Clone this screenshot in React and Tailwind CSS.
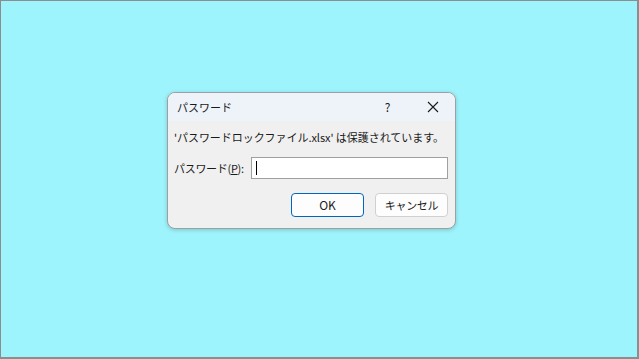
import React from 'react';

const font = { fontFamily: '"Noto Sans CJK JP", "Noto Sans", sans-serif' };

const App = () => {
    return (
        <div
            className="w-[639px] h-[359px] bg-[#9ef4fc] border border-[#8d8d8d] border-r-2 border-b-2 pl-[166px] pt-[91px]"
            style={font}
        >
            <div className="w-[289px] h-[137px] bg-[#f0f0f0] border border-[#9aa0a6] rounded-[8px] shadow-[0_1px_4px_rgba(0,0,0,0.2)] flex flex-col overflow-hidden text-[11px] text-[#1a1a1a] whitespace-nowrap">
                {/* タイトルバー */}
                <div className="h-[28px] bg-[#eef3f9] flex items-center pl-[9px]">
                    <span className="flex-1 leading-none">パスワード</span>
                    <span className="w-[45px] text-center text-[12px] leading-none">?</span>
                    <span className="w-[45px] flex items-center justify-center">
                        <svg width="12" height="12" viewBox="0 0 12 12">
                            <path d="M1 1L11 11M11 1L1 11" stroke="#1a1a1a" strokeWidth="1.1" />
                        </svg>
                    </span>
                </div>

                <div className="flex flex-col px-[6px] pt-[11px]">
                    <p className="leading-none tracking-[-0.05px]">'パスワードロックファイル.xlsx' は保護されています。</p>

                    <div className="flex items-center mt-[14px]">
                        <label className="w-[77px] leading-none tracking-[-0.3px]">
                            パスワード(<span className="underline">P</span>):
                        </label>
                        <div className="w-[197px] h-[22px] bg-white border border-[#a0a0a0] flex items-center pl-[4px]">
                            <div className="w-[1px] h-[14px] bg-black" />
                        </div>
                    </div>

                    <div className="flex justify-end gap-[11px] mt-[14px] pr-[1px]">
                        <button className="w-[73px] h-[24px] bg-[#fdfdfd] border border-[#0067c0] rounded-[4px] text-[12px] leading-none">
                            OK
                        </button>
                        <button className="w-[73px] h-[24px] bg-[#fdfdfd] border border-[#d0d0d0] rounded-[4px] text-[11px] leading-none tracking-[-0.3px]">
                            キャンセル
                        </button>
                    </div>
                </div>
            </div>
        </div>
    );
};

export default App;
